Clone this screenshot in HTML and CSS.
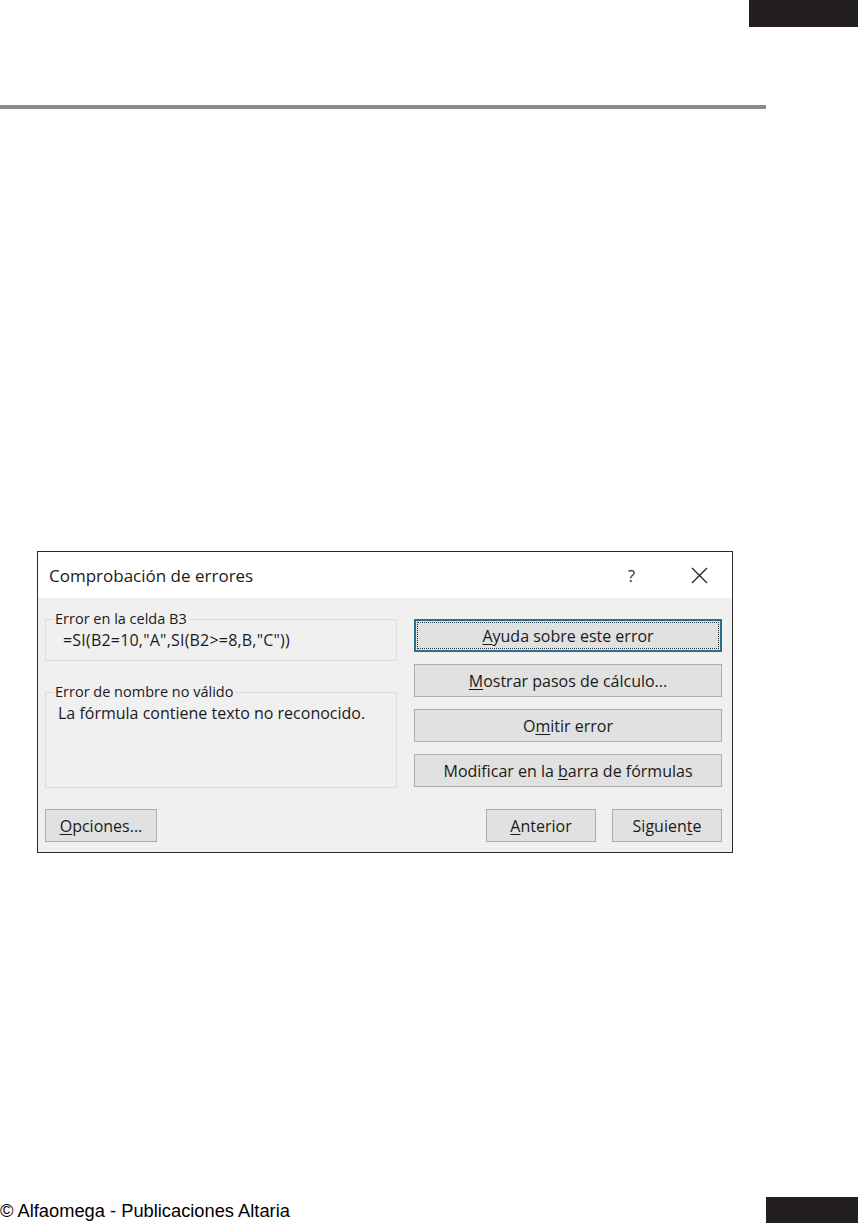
FILE: index.html
```html
<!DOCTYPE html>
<html lang="es">
<head>
  <meta charset="UTF-8" />
  <title>Comprobación de errores</title>
  <link rel="stylesheet" href="styles.css">
</head>
<body>
  <div class="page">
    <div class="top">
      <div class="tab"></div>
    </div>
    <div class="rule"></div>

    <div class="dialog" role="dialog" aria-label="Comprobación de errores">
      <div class="titlebar">
        <span class="title">Comprobación de errores</span>
        <span class="help">?</span>
        <svg class="close" width="17" height="17" viewBox="0 0 17 17">
          <path d="M1 1 L16 16 M16 1 L1 16" stroke="#222" stroke-width="1.3" fill="none"/>
        </svg>
      </div>
      <div class="body">
        <div class="left">
          <fieldset class="group first">
            <legend>Error en la celda B3</legend>
            <p class="formula">=SI(B2=10,"A",SI(B2&gt;=8,B,"C"))</p>
          </fieldset>
          <fieldset class="group second">
            <legend>Error de nombre no válido</legend>
            <p>La fórmula contiene texto no reconocido.</p>
          </fieldset>
        </div>
        <div class="right">
          <button class="btn focused"><span><u>A</u>yuda sobre este error</span></button>
          <button class="btn"><u>M</u>ostrar pasos de cálculo...</button>
          <button class="btn">O<u>m</u>itir error</button>
          <button class="btn">Modificar en la <u>b</u>arra de fórmulas</button>
        </div>
        <div class="bottom">
          <button class="btn small"><u>O</u>pciones...</button>
          <div class="nav">
            <button class="btn small"><u>A</u>nterior</button>
            <button class="btn small">Siguien<u>t</u>e</button>
          </div>
        </div>
      </div>
    </div>

    <div class="footer">
      <span>© Alfaomega - Publicaciones Altaria</span>
      <div class="tab low"></div>
    </div>
  </div>
</body>
</html>
```

FILE: styles.css
```css
body {
  margin: 0;
  background: #fff;
  font-family: "Open Sans", "Noto Sans", sans-serif;
  color: #1a1a1a;
}
.page {
  width: 858px;
  height: 1223px;
  display: flex;
  flex-direction: column;
}
.top {
  display: flex;
  justify-content: flex-end;
}
.tab {
  width: 109px;
  height: 27px;
  background: #231f20;
}
.rule {
  width: 766px;
  height: 4px;
  margin-top: 78px;
  background: #8a8a8a;
}

/* dialog */
.dialog {
  margin: 442px 0 0 37px;
  width: 694px;
  border: 1px solid #2b2b2b;
  background: #f0f0f0;
}
.titlebar {
  height: 46px;
  background: #fff;
  display: flex;
  align-items: center;
  padding: 0 24px 0 11px;
  font-size: 17px;
}
.title {
  flex: 1;
}
.help {
  font-size: 17px;
  margin-right: 56px;
  color: #333;
}
.close {
  margin-top: 1px;
}
.body {
  display: grid;
  grid-template-columns: 352px 308px;
  column-gap: 17px;
  padding: 12px 9px 10px 7px;
  font-size: 16px;
}
.left {
  display: flex;
  flex-direction: column;
}
.group {
  margin: 0;
  border: 1px solid #dcdcdc;
  padding: 0 10px;
}
.group legend {
  padding: 0 2px;
  margin-left: -3px;
  line-height: 18px;
  font-size: 14.5px;
}
.group p {
  margin: 0;
}
.group.first {
  height: 49px;
}
.group.first p {
  padding: 1px 0 0 7px;
  word-spacing: 1px;
  letter-spacing: 0.2px;
}
.group.second {
  margin-top: 22px;
  height: 103px;
}
.group.second p {
  padding: 1px 0 0 2px;
}
.right {
  display: flex;
  flex-direction: column;
  gap: 12px;
  padding-top: 9px;
}
.btn {
  height: 33px;
  border: 1px solid #adadad;
  background: #e1e1e1;
  font-family: inherit;
  font-size: 16px;
  color: #1a1a1a;
  padding: 0;
  cursor: pointer;
}
.btn u {
  text-underline-offset: 2px;
}
.btn.focused {
  border: 2px solid #2b6b94;
  padding: 1px;
}
.btn.focused span {
  display: flex;
  align-items: center;
  justify-content: center;
  height: 100%;
  border: 1px dotted #333;
  box-sizing: border-box;
}
.bottom {
  grid-column: 1 / 3;
  display: flex;
  justify-content: space-between;
  margin-top: 21px;
}
.btn.small {
  width: 112px;
}
.nav {
  display: flex;
  gap: 16px;
}
.nav .btn.small {
  width: 110px;
}

/* footer */
.footer {
  margin-top: auto;
  display: flex;
  justify-content: space-between;
  align-items: flex-end;
  font-family: "Liberation Sans", Arial, sans-serif;
  font-size: 18.3px;
  color: #000;
}
.footer span {
  padding-bottom: 1px;
}
.tab.low {
  width: 92px;
  height: 26px;
}
```
